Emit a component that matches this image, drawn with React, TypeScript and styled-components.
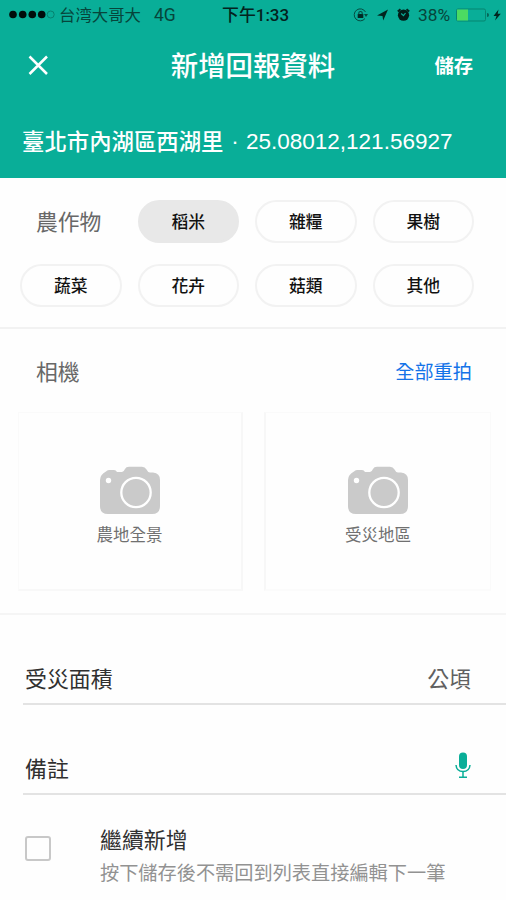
import React from 'react';
import styled, { createGlobalStyle } from 'styled-components';

const GREEN = '#09ae98';

const GlobalStyle = createGlobalStyle`
  * { box-sizing: border-box; }
  body {
    margin: 0;
    background: #fefefe;
    font-family: "Noto Sans CJK TC", sans-serif;
    overflow: hidden;
  }
  button { font: inherit; padding: 0; border: 0; background: none; }
`;

const Screen = styled.main`
  width: 506px;
  height: 900px;
  display: flex;
  flex-direction: column;
  background: #fefefe;
  overflow: hidden;
  white-space: nowrap;
`;

const Header = styled.header`
  height: 178px;
  flex: none;
  background: ${GREEN};
  color: #fff;
`;

const StatusBar = styled.div`
  height: 30px;
  padding: 0 5px 0 9px;
  display: grid;
  grid-template-columns: 213px 1fr auto;
  align-items: center;
  color: #06453b;
  font-size: 16.4px;
  line-height: 29px;
`;

const StatusGroup = styled.div`
  display: flex;
  align-items: center;
  height: 29px;
`;

const Signal = styled.svg`
  width: 47px;
  height: 10px;
  margin-right: 3px;
`;

const Carrier = styled.span`
  font-family: "Noto Sans CJK SC", sans-serif;
  font-weight: 400;
  width: 95px;
  line-height: 27px;
  padding-bottom: 2px;
`;

const Network = styled.span`
  font-family: Roboto, sans-serif;
  font-size: 17.5px;
`;

const Clock = styled.span`
  font-family: Roboto, "Noto Sans CJK TC", sans-serif;
  font-weight: 500;
  font-size: 16.9px;
  color: #04231e;
`;

const Percent = styled.span`
  font-family: Roboto, sans-serif;
  font-size: 17.3px;
  width: 33px;
  margin-right: 5px;
`;

const StatusIcon = styled.svg<{ $w: number; $gap: number }>`
  width: ${(p) => p.$w}px;
  height: 16px;
  margin-right: ${(p) => p.$gap}px;
`;

const NavBar = styled.nav`
  height: 70px;
  padding: 0 33px 0 27px;
  display: grid;
  grid-template-columns: 103px 1fr 97px;
  align-items: center;
`;

const CloseButton = styled.button`
  display: flex;
  width: 22px;
  color: #fff;
`;

const Title = styled.h1`
  margin: 0;
  padding-bottom: 2px;
  font-size: 27.4px;
  font-weight: 500;
  line-height: 38px;
  text-align: center;
`;

const SaveButton = styled.button`
  justify-self: end;
  color: #fff;
  font-size: 19.3px;
  font-weight: 700;
  line-height: 30px;
`;

const Address = styled.div`
  height: 82px;
  padding-left: 22px;
  font-family: "Liberation Sans", "Noto Sans CJK TC", sans-serif;
  font-size: 22.5px;
  line-height: 83px;
  display: flex;
`;

const Place = styled.span`
  width: 202px;
  font-family: "Noto Sans CJK TC", sans-serif;
  font-weight: 500;
  font-size: 22.4px;
  line-height: 81px;
`;

const Dot = styled.span`
  width: 22px;
  text-align: center;
`;

const CropSection = styled.section`
  height: 151px;
  padding: 22px 32px 0 20px;
  border-bottom: 2px solid #f2f2f2;
  display: grid;
  grid-template-columns: repeat(4, 101.5px);
  grid-auto-rows: 43px;
  column-gap: 16px;
  row-gap: 21px;
  align-content: start;
`;

const SectionLabel = styled.h2`
  margin: 0;
  font-size: 21.8px;
  font-weight: 400;
  line-height: 41px;
  color: #686868;
`;

const CropLabel = styled(SectionLabel)`
  padding-left: 16px;
`;

const Chip = styled.button<{ $active?: boolean }>`
  height: 43px;
  border: 2px solid ${(p) => (p.$active ? '#e8e8e8' : '#f2f2f2')};
  border-radius: 22px;
  background: ${(p) => (p.$active ? '#e8e8e8' : '#fefefe')};
  color: #111;
  font-size: 16.8px;
  font-weight: 500;
  line-height: 39px;
`;

const CameraSection = styled.section`
  height: 286px;
  padding: 21px 15px 0 18px;
  border-bottom: 2px solid #f5f5f5;
`;

const CameraHead = styled.div`
  height: 62px;
  padding: 0 19px 0 18px;
  display: flex;
  justify-content: space-between;
`;

const RetakeButton = styled.button`
  height: 43px;
  color: #1473e8;
  font-size: 19.2px;
  line-height: 43px;
`;

const Cards = styled.div`
  display: grid;
  grid-template-columns: 225px 227px;
  column-gap: 21px;
`;

const PhotoCard = styled.button<{ $edge: 'left' | 'right' }>`
  height: 179px;
  border: 1px solid #fafafa;
  border-${(p) => p.$edge}: 2px solid #f7f7f7;
  border-bottom: 2px solid ${(p) => (p.$edge === 'right' ? '#f8f8f8' : '#fbfbfb')};
  display: flex;
  flex-direction: column;
  align-items: center;
  padding-top: 53px;
  padding-${(p) => p.$edge}: ${(p) => (p.$edge === 'right' ? 1 : 0)}px;
  color: #707070;
  font-size: 16.5px;
  line-height: 24px;
`;

const CameraSvg = styled.svg`
  width: 60px;
  height: 49px;
  margin-bottom: 7px;
`;

const FieldRow = styled.div<{ $h: number; $pad: number }>`
  height: ${(p) => p.$h}px;
  margin-left: 23px;
  padding: ${(p) => p.$pad}px 35px 0 2px;
  border-bottom: 2px solid #e3e3e3;
  display: flex;
  justify-content: space-between;
  align-items: flex-start;
  font-size: 21.9px;
  line-height: 36px;
  color: #303030;
`;

const Unit = styled.span`
  color: #606060;
`;

const MicSvg = styled.svg`
  width: 16px;
  height: 27px;
  margin: 2px 0 0;
`;

const ContinueRow = styled.label`
  display: flex;
  padding: 26px 0 0 25px;
`;

const CheckBox = styled.span`
  width: 26px;
  height: 25px;
  margin: 15px 49px 0 0;
  border: 2px solid #c8c8c8;
  border-radius: 3px;
  flex: none;
`;

const ContinueText = styled.div`
  display: flex;
  flex-direction: column;
`;

const ContinueTitle = styled.span`
  font-size: 21.9px;
  line-height: 36px;
  color: #303030;
`;

const ContinueNote = styled.span`
  font-size: 19.2px;
  line-height: 30px;
  color: #929292;
`;

const CameraIcon = () => (
  <CameraSvg viewBox="0 0 60 49">
    <path
      fill="#cacaca"
      d="M6 5.5Q7 4 9 4H14Q16 4 17 6H22Q24 5.500 25 3Q26 .7 29 .7H42Q45 .7 46.500 3.500Q47.700 6.200 50 6.500H53Q60 7 60 14V40Q60 48 52 48H8Q0 48 0 40V14Q0 8.500 6 5.500Z"
    />
    <circle cx="8.500" cy="14.500" r="2.700" fill="#fff" />
    <circle cx="36" cy="26.500" r="14.700" fill="none" stroke="#fff" strokeWidth="2.300" />
  </CameraSvg>
);

const MicIcon = () => (
  <MicSvg viewBox="0 0 16 27" fill="none" stroke={GREEN}>
    <rect x="4" y="0.500" width="8" height="16.500" rx="4" fill={GREEN} stroke="none" />
    <path d="M1 13Q1.500 19.500 8 19.500Q14.500 19.500 15 13" strokeWidth="1.500" />
    <path d="M8 19.500V25.300M4 25.300H12" strokeWidth="1.500" />
  </MicSvg>
);

const App = () => (
  <>
    <GlobalStyle />
    <Screen>
      <Header>
        <StatusBar>
          <StatusGroup>
            <Signal viewBox="0 0 47 10">
              {[4, 13.700, 23.300, 32.700].map((x) => (
                <circle key={x} cx={x} cy="4.500" r="3.800" fill="#010d0b" />
              ))}
              <circle cx="41.700" cy="4.500" r="3.500" fill="none" stroke="#067665" strokeWidth="0.800" />
            </Signal>
            <Carrier>台湾大哥大</Carrier>
            <Network>4G</Network>
          </StatusGroup>
          <Clock>下午1:33</Clock>
          <StatusGroup>
            <StatusIcon $w={15} $gap={9} viewBox="0 0 15 16" fill="none" stroke="#054c41">
              <path d="M12 11.500A6 6 0 1 1 12.500 5" strokeWidth="1" />
              <path d="M11 7H15L13 10Z" fill="#054c41" stroke="none" />
              <rect x="4.700" y="7" width="5.600" height="4" fill="#022a24" stroke="none" />
              <path d="M5.800 7.500V6Q5.800 4.500 7.500 4.500T9.200 6V7.500" strokeWidth="1.100" />
            </StatusIcon>
            <StatusIcon $w={11} $gap={9} viewBox="0 0 11 16">
              <path d="M0 8.500L11 2.500L6.200 13.500L5.500 9Z" fill="#02251f" />
            </StatusIcon>
            <StatusIcon $w={13} $gap={8} viewBox="0 0 13 16">
              <path d="M.8 4.500L3.500 2.200M12.200 4.500L9.500 2.200" stroke="#02251f" strokeWidth="2" />
              <circle cx="6.500" cy="8.200" r="5.600" fill="#021d18" />
              <path d="M4.200 6.500L6.500 8.700L8.500 6" fill="none" stroke={GREEN} strokeWidth="1.200" />
            </StatusIcon>
            <Percent>38%</Percent>
            <StatusIcon $w={33} $gap={4} viewBox="0 0 33 16">
              <rect x=".5" y="2" width="29" height="12" rx="1.500" fill="none" stroke="#078571" />
              <rect x="1" y="2.500" width="11" height="11" fill="#4cdb62" />
              <path d="M31 6Q33 6 33 8T31 10Z" fill="#056557" />
            </StatusIcon>
            <StatusIcon $w={8} $gap={0} viewBox="0 0 8 16">
              <path d="M5.500 2.500L.5 9H3.500L2 13.500L7.800 6.800H4.700Z" fill="#02251f" />
            </StatusIcon>
          </StatusGroup>
        </StatusBar>
        <NavBar>
          <CloseButton aria-label="關閉">
            <svg width="22" height="22" viewBox="0 0 22 22">
              <path d="M2.500 2.500L20 20M20 2.500L2.500 20" stroke="#fff" strokeWidth="2.500" />
            </svg>
          </CloseButton>
          <Title>新增回報資料</Title>
          <SaveButton>儲存</SaveButton>
        </NavBar>
        <Address>
          <Place>臺北市內湖區西湖里</Place>
          <Dot>·</Dot>
          <span>25.08012,121.56927</span>
        </Address>
      </Header>

      <CropSection>
        <CropLabel>農作物</CropLabel>
        <Chip $active>稻米</Chip>
        {['雜糧', '果樹', '蔬菜', '花卉', '菇類', '其他'].map((crop) => (
          <Chip key={crop}>{crop}</Chip>
        ))}
      </CropSection>

      <CameraSection>
        <CameraHead>
          <SectionLabel>相機</SectionLabel>
          <RetakeButton>全部重拍</RetakeButton>
        </CameraHead>
        <Cards>
          <PhotoCard $edge="right">
            <CameraIcon />
            農地全景
          </PhotoCard>
          <PhotoCard $edge="left">
            <CameraIcon />
            受災地區
          </PhotoCard>
        </Cards>
      </CameraSection>

      <FieldRow $h={90} $pad={45}>
        <span>受災面積</span>
        <Unit>公頃</Unit>
      </FieldRow>
      <FieldRow $h={90} $pad={45}>
        <span>備註</span>
        <MicIcon />
      </FieldRow>

      <ContinueRow>
        <CheckBox />
        <ContinueText>
          <ContinueTitle>繼續新增</ContinueTitle>
          <ContinueNote>按下儲存後不需回到列表直接編輯下一筆</ContinueNote>
        </ContinueText>
      </ContinueRow>
    </Screen>
  </>
);

export default App;
